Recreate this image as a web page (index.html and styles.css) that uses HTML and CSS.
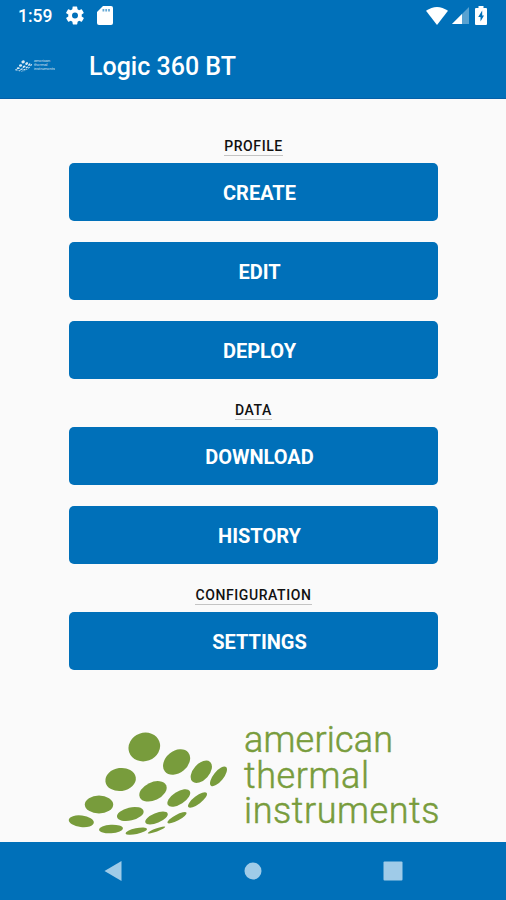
FILE: index.html
```html
<!DOCTYPE html>
<html lang="en">
<head>
    <meta charset="utf-8">
    <title>Logic 360 BT</title>
    <link rel="stylesheet" href="styles.css">
</head>
<body>
    <header>
        <div class="status-bar">
            <span class="time">1:59</span>
            <svg class="gear" viewBox="2 2 20 20" width="18" height="19"><path d="M19.4 13c0-.3.1-.6.1-1s0-.7-.1-1l2.1-1.600c.2-.2.200-.4.100-.6l-2-3.500c-.1-.2-.4-.3-.6-.2l-2.500 1c-.5-.4-1.100-.7-1.700-1l-.4-2.600c0-.3-.2-.5-.5-.5h-4c-.2 0-.4.200-.5.400l-.4 2.700c-.6.200-1.100.600-1.700 1l-2.500-1c-.2-.1-.5 0-.6.200l-2 3.500c-.1.200-.1.500.1.600L4.600 11c0 .3-.1.600-.1 1s0 .7.100 1l-2.200 1.600c-.1.200-.2.400-.1.600l2 3.500c.1.200.4.300.6.200l2.500-1c.5.400 1.100.7 1.700 1l.4 2.600c0 .3.200.5.500.5h4c.3 0 .5-.2.500-.5l.4-2.600c.6-.2 1.200-.6 1.700-1l2.500 1c.2.100.5 0 .6-.2l2-3.500c.1-.2.100-.4-.1-.6zM12 15.300a3.300 3.300 0 1 1 0-6.600 3.300 3.300 0 0 1 0 6.600z"/></svg>
            <svg class="sd-card" viewBox="0 0 16 19" width="16" height="19"><path d="M6 0h8q2 0 2 2v15q0 2-2 2H2q-2 0-2-2V6z"/><path class="contacts" d="M5.500 3h1.800v2.500H5.500zM8.300 3h1.800v2.500H8.300zM11.100 3h1.800v2.500h-1.800z"/></svg>
            <div class="signals">
                <svg viewBox="0 0 22 18" width="22" height="18"><path d="M0 3.800Q11-3.800 22 3.800L11 18z"/></svg>
                <svg viewBox="0 0 17 17" width="17" height="17"><path class="dim" d="M17 0v17H0z"/><path d="M10 7v10H0z"/></svg>
                <svg viewBox="0 0 12 19" width="12" height="19"><path d="M3.500 0h5v2H11q1 0 1 1v15q0 1-1 1H1q-1 0-1-1V3q0-1 1-1h2.500z"/><path class="bolt" d="M7.200 4.500L3.200 11h2.300V15.500L9 9.400H7.200z"/></svg>
            </div>
        </div>
        <div class="app-bar">
            <svg class="logo-small" viewBox="0 0 370 112"><use href="#logo"/></svg>
            <h1>Logic 360 BT</h1>
        </div>
    </header>

    <main>
        <h2>PROFILE</h2>
        <button>CREATE</button>
        <button>EDIT</button>
        <button>DEPLOY</button>

        <h2>DATA</h2>
        <button>DOWNLOAD</button>
        <button>HISTORY</button>

        <h2>CONFIGURATION</h2>
        <button>SETTINGS</button>

        <svg class="logo" viewBox="0 0 370 112">
            <g id="logo">
                <ellipse cx="75.300" cy="23" rx="16" ry="14.200" transform="rotate(-20 75.300 23)"/>
                <ellipse cx="107.600" cy="38" rx="15" ry="11" transform="rotate(-39 107.600 38)"/>
                <ellipse cx="132.300" cy="47.800" rx="13.200" ry="8" transform="rotate(-48 132.300 47.800)"/>
                <ellipse cx="149.500" cy="52.300" rx="12" ry="5" transform="rotate(-51 149.500 52.300)"/>

                <ellipse cx="51.600" cy="55.500" rx="15.300" ry="11.500" transform="rotate(-8 51.600 55.500)"/>
                <ellipse cx="84" cy="67.300" rx="14.500" ry="9" transform="rotate(-25 84 67.300)"/>
                <ellipse cx="109.800" cy="74" rx="13" ry="6.300" transform="rotate(-33 109.800 74)"/>
                <ellipse cx="128.500" cy="76" rx="11.500" ry="4" transform="rotate(-37 128.500 76)"/>

                <ellipse cx="30" cy="80.500" rx="14.200" ry="9"/>
                <ellipse cx="61.300" cy="90" rx="13.600" ry="6.500" transform="rotate(-13 61.300 90)"/>
                <ellipse cx="87.500" cy="94" rx="12" ry="4.900" transform="rotate(-22 87.500 94)"/>
                <ellipse cx="108" cy="93.700" rx="10.800" ry="2.900" transform="rotate(-28 108 93.700)"/>

                <ellipse cx="12.300" cy="97.300" rx="12.600" ry="5.800" transform="rotate(7 12.300 97.300)"/>
                <ellipse cx="42" cy="105" rx="12" ry="4.200" transform="rotate(-3 42 105)"/>
                <ellipse cx="67.300" cy="107.200" rx="11" ry="2.900" transform="rotate(-12 67.300 107.200)"/>
                <ellipse cx="87.500" cy="106" rx="9.300" ry="1.600" transform="rotate(-20 87.500 106)"/>

                <text x="175" y="28" textLength="149">american</text>
                <text x="175" y="63.700" textLength="125">thermal</text>
                <text x="175" y="99.300" textLength="195.500">instruments</text>
            </g>
        </svg>
    </main>

    <nav>
        <svg viewBox="0 0 20 20" width="20" height="20"><path d="M18.500 0v20L1.500 10z"/></svg>
        <svg viewBox="0 0 20 20" width="20" height="20"><circle cx="10" cy="10" r="8.500"/></svg>
        <svg viewBox="0 0 20 20" width="20" height="20"><rect x=".5" y=".5" width="19" height="19" rx="1"/></svg>
    </nav>
</body>
</html>
```

FILE: styles.css
```css
* {
    box-sizing: border-box;
}

body {
    margin: 0;
    height: 900px;
    display: flex;
    flex-direction: column;
    overflow: hidden;
    background: #fafafa;
    font-family: Roboto, sans-serif;
}

header {
    height: 99px;
    background: #0070b9;
    border-bottom: 1px solid #0460a8;
    color: white;
}

svg {
    fill: white;
    flex-shrink: 0;
}

.status-bar {
    display: flex;
    height: 31px;
    padding: 0 19px 0 18px;
    align-items: center;
}

.time {
    width: 48px;
    font-size: 17.5px;
    font-weight: 500;
}

.sd-card {
    margin-left: 13px;
}

.contacts,
.bolt {
    fill: #0070b9;
}

.contacts {
    opacity: 0.6;
}

.signals {
    display: flex;
    align-items: center;
    margin-left: auto;
}

.signals svg + svg {
    margin-left: 4px;
}

.signals svg:last-child {
    margin-left: 6px;
}

.dim {
    opacity: 0.35;
}

.app-bar {
    display: flex;
    height: 69px;
    padding-left: 15px;
    align-items: center;
}

.logo-small {
    width: 40px;
    height: 13px;
    color: white;
    opacity: 0.85;
}

h1 {
    margin: 1px 0 0 34px;
    font-size: 25px;
    font-weight: 500;
}

main {
    flex: 1;
    display: flex;
    flex-direction: column;
    align-items: center;
    padding: 38px 68px 0 69px;
}

h2 {
    margin: 0 0 7px;
    height: 19px;
    border-bottom: 1px solid #c4c4c4;
    color: #111;
    font-size: 14px;
    font-weight: 500;
    letter-spacing: 0.6px;
    line-height: 19px;
}

button + h2 {
    margin-top: 1px;
}

button {
    width: 100%;
    height: 58px;
    margin-bottom: 21px;
    padding: 2px 0 0 12px;
    border: none;
    border-radius: 5px;
    background: #0070b9;
    color: white;
    font-family: inherit;
    font-size: 20px;
    font-weight: 700;
}

.logo {
    width: 370px;
    height: 112px;
    margin-top: 33px;
    color: #789c3c;
    fill: #789c3c;
    overflow: visible;
}

text {
    font-size: 36px;
    font-weight: 300;
    stroke: currentColor;
    stroke-width: 0.5px;
}

nav {
    display: flex;
    height: 58px;
    padding: 0 103px;
    align-items: center;
    justify-content: space-between;
    background: #0070b9;
}

nav svg {
    fill: #9fcbe8;
}
```
